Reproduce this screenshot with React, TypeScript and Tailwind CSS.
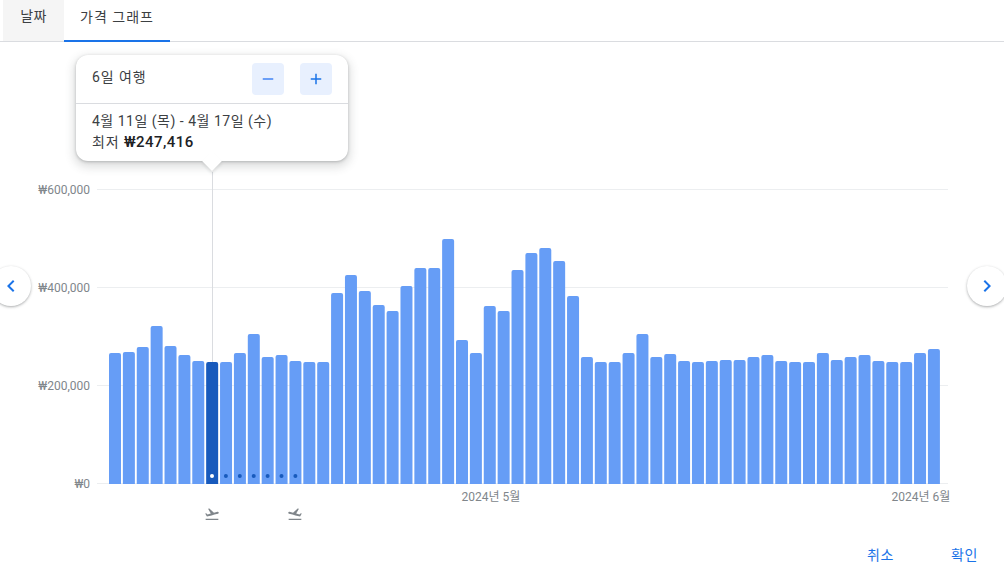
const BASE_Y = 484;
const BAR_W = 12;
const PITCH = 13.88;
const START_X = 109;

// top edge of every bar in page pixels (chart svg starts at y=42)
const TOPS = [
  353, 352, 347, 326, 346, 355, 361, 362, 362, 353, 334, 357, 355, 361, 362, 362, 293, 275, 291, 305,
  311, 286, 268, 268, 239, 340, 353, 306, 311, 270, 253, 248, 261, 296, 357, 362, 362, 353, 334, 357,
  354, 361, 362, 361, 360, 360, 357, 355, 361, 362, 362, 353, 360, 357, 355, 361, 362, 362, 353, 349,
];

const GRID = [
  { y: 190, label: '₩600,000' },
  { y: 288, label: '₩400,000' },
  { y: 386, label: '₩200,000' },
  { y: 484, label: '₩0' },
];

const DOTS = [0, 1, 2, 3, 4, 5, 6];
const SELECTED = 7;

const TAKEOFF =
  'M2.5 19h19v2h-19zm19.57-9.36c-.21-.8-1.04-1.28-1.84-1.06L14.92 10l-6.9-6.43-1.93.51 4.14 7.17-4.97 1.33-1.97-1.54-1.45.39 1.82 3.16.77 1.33 1.6-.43 5.31-1.42 4.35-1.16L21 11.49c.81-.23 1.28-1.05 1.07-1.85z';

function barPath(x: number, top: number) {
  const r = 2;
  return `M${x} ${BASE_Y}V${top + r}Q${x} ${top} ${x + r} ${top}H${x + BAR_W - r}Q${x + BAR_W} ${top} ${x + BAR_W} ${top + r}V${BASE_Y}Z`;
}

function Chart() {
  return (
    <svg width={1004} height={492} viewBox="0 42 1004 492" className="block">
      {GRID.map((g) => (
        <g key={g.y}>
          <line x1={97} x2={948} y1={g.y - 0.5} y2={g.y - 0.5} stroke="#eceef0" />
          <text x={90} y={g.y + 4} textAnchor="end" fontSize={12} fill="#80868b">
            {g.label}
          </text>
        </g>
      ))}
      <line x1={212.5} x2={212.5} y1={172} y2={484} stroke="#dadce0" />
      {TOPS.map((top, i) => (
        <path
          key={i}
          d={barPath(START_X + i * PITCH, top)}
          fill={i === SELECTED ? '#185abc' : '#669df6'}
        />
      ))}
      {DOTS.map((d) => (
        <circle
          key={d}
          cx={212 + d * 13.9}
          cy={476}
          r={2}
          fill={d === 0 ? '#ffffff' : '#185abc'}
        />
      ))}
      <text x={491} y={501} textAnchor="middle" fontSize={12} fill="#80868b">
        2024년 5월
      </text>
      <text x={921} y={501} textAnchor="middle" fontSize={12} fill="#80868b">
        2024년 6월
      </text>
      <g transform="translate(204 506)" fill="#80868b">
        <path d={TAKEOFF} transform="scale(0.667)" />
      </g>
      <g transform="translate(303 506) scale(-1 1)" fill="#80868b">
        <path d={TAKEOFF} transform="scale(0.667)" />
      </g>
    </svg>
  );
}

function NavButton({ side }: { side: 'left' | 'right' }) {
  return (
    <button
      className={`absolute top-[266px] flex h-10 w-10 items-center justify-center rounded-full bg-white shadow-[0_1px_3px_rgba(60,64,67,0.3),0_1px_2px_rgba(60,64,67,0.15)] ${
        side === 'left' ? 'left-[-9px]' : 'left-[967px]'
      }`}
    >
      <svg width={24} height={24} viewBox="0 0 24 24" fill="#1a73e8">
        {side === 'left' ? (
          <path d="M15.41 7.41 14 6l-6 6 6 6 1.41-1.41L10.83 12z" />
        ) : (
          <path d="M8.59 16.59 10 18l6-6-6-6-1.41 1.41L13.17 12z" />
        )}
      </svg>
    </button>
  );
}

function Tooltip() {
  return (
    <div className="absolute left-[76px] top-[55px] w-[272px] rounded-xl bg-white text-[14px] text-[#202124] shadow-[0_1px_3px_rgba(60,64,67,0.3),0_4px_8px_3px_rgba(60,64,67,0.15)]">
      <div className="flex h-[49px] items-center justify-between border-b border-[#dadce0] pl-4 pr-4">
        <span className="mb-[3px] tracking-[0.9px] text-[#3c4043]">6일 여행</span>
        <div className="flex gap-4">
          <button className="flex h-8 w-8 items-center justify-center rounded bg-[#e8f0fe]">
            <svg width={18} height={18} viewBox="0 0 24 24" fill="#4285f4">
              <path d="M5 11h14v2H5z" />
            </svg>
          </button>
          <button className="flex h-8 w-8 items-center justify-center rounded bg-[#e8f0fe]">
            <svg width={18} height={18} viewBox="0 0 24 24" fill="#1a73e8">
              <path d="M19 13h-6v6h-2v-6H5v-2h6V5h2v6h6z" />
            </svg>
          </button>
        </div>
      </div>
      <div className="px-4 pb-[8px] pt-[7px] leading-[21px]">
        <div className="tracking-[0.5px] text-[#3c4043]">4월 11일 (목) - 4월 17일 (수)</div>
        <div className="tracking-[0.9px] text-[#3c4043]">
          최저 <span className="text-[15px] font-medium tracking-[0.45px] text-[#202124]">₩247,416</span>
        </div>
      </div>
      <div className="absolute left-[129px] top-[100%] h-[14px] w-[14px] -translate-y-[7px] rotate-45 bg-white shadow-[2px_2px_3px_rgba(60,64,67,0.12)]" />
    </div>
  );
}

export default function App() {
  return (
    <div className="relative h-[574px] w-[1004px] overflow-hidden bg-white font-['Roboto','Noto_Sans_CJK_KR',sans-serif]">
      {/* Tabs */}
      <div className="flex h-[42px] items-stretch border-b border-[#dadce0] pl-[3px] text-[14px] text-[#3c4043]">
        <div className="flex w-[61px] items-center justify-center bg-[#f5f5f5] pb-[8px] tracking-[0.3px]">날짜</div>
        <div className="mb-[-1px] flex w-[106px] items-center justify-center border-b-2 border-[#1a73e8] pb-[6px] tracking-[1px]">
          가격 그래프
        </div>
      </div>

      <Chart />

      {/* Footer actions */}
      <div className="flex justify-end gap-[57px] pr-[26px] text-[14px] tracking-[0.6px] text-[#1a73e8]">
        <button className="mt-[11px] leading-[20px]">취소</button>
        <button className="mt-[11px] leading-[20px]">확인</button>
      </div>

      <Tooltip />
      <NavButton side="left" />
      <NavButton side="right" />
    </div>
  );
}
